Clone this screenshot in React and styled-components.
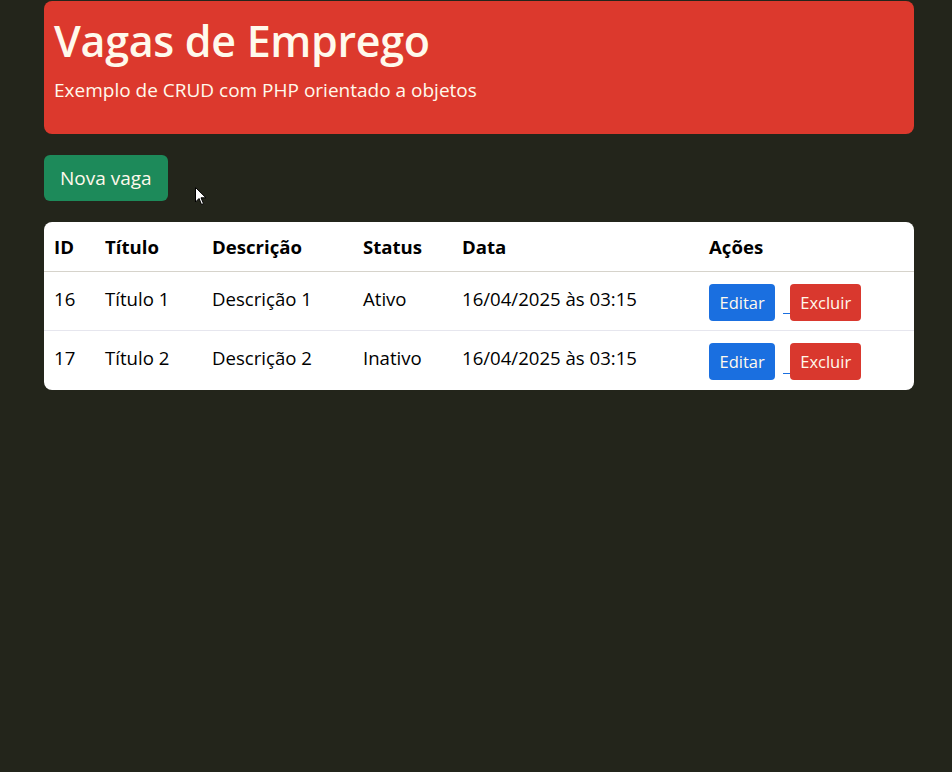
import React from "react";
import styled, { createGlobalStyle } from "styled-components";

const Global = createGlobalStyle`
  html, body { margin: 0; padding: 0; }
  body {
    background: #23251b;
    font-family: "Open Sans", "Noto Sans", sans-serif;
    color: #000;
    min-height: 772px;
  }
`;

const Container = styled.div`
  width: 870px;
  margin-left: 44px;
  padding-top: 1px;
  display: flex;
  flex-direction: column;
  align-items: flex-start;
`;

const Jumbo = styled.section`
  box-sizing: border-box;
  width: 100%;
  height: 133px;
  background: #dc392d;
  border-radius: 8px;
  padding: 13px 10px;
  color: #fff9ec;
`;

const Title = styled.h1`
  margin: 0;
  font-size: 43px;
  font-weight: 600;
  line-height: 54px;
  letter-spacing: -0.3px;
`;

const Subtitle = styled.p`
  margin: 9px 0 0;
  font-size: 19px;
  line-height: 26px;
`;

const ActionBar = styled.div`
  margin-top: 21px;
  position: relative;
`;

const Button = styled.a`
  display: inline-flex;
  align-items: center;
  justify-content: center;
  box-sizing: border-box;
  height: ${(p) => p.$h || 37}px;
  padding: 0 ${(p) => p.$px || 12}px;
  background: ${(p) => p.$bg};
  color: #fff9ec;
  border-radius: ${(p) => p.$r || 4}px;
  font-size: ${(p) => p.$fs || 16.5}px;
  text-decoration: none;
  white-space: nowrap;
`;

const Cursor = styled.svg`
  position: absolute;
  left: 151px;
  top: 32px;
`;

const Table = styled.table`
  margin-top: 21px;
  width: 870px;
  background: #fff;
  border-radius: 8px;
  border-collapse: separate;
  border-spacing: 0;
  overflow: hidden;
  font-size: 18.6px;
`;

const Th = styled.th`
  text-align: left;
  font-weight: 700;
  height: 50px;
  box-sizing: border-box;
  padding: 0 0 0 ${(p) => p.$pl || 0}px;
  border-bottom: 1px solid #d6d3cb;
  width: ${(p) => p.$w}px;
`;

const Td = styled.td`
  height: 59px;
  box-sizing: border-box;
  padding: 0 0 0 ${(p) => p.$pl || 0}px;
  border-bottom: ${(p) => (p.$last ? "none" : "1px solid #e6e6ee")};
  vertical-align: middle;
`;

const TdText = styled.span`
  position: relative;
  top: -3px;
`;

const Actions = styled.div`
  display: flex;
  align-items: center;
  position: relative;
  top: 1px;
`;

const Gap = styled.span`
  display: inline-block;
  width: 15px;
  height: 20px;
  position: relative;
  &::after {
    content: "";
    position: absolute;
    left: 8px;
    right: 0;
    bottom: -2px;
    height: 1px;
    background: #1a6fe0;
  }
`;

const rows = [
  { id: 16, titulo: "Título 1", desc: "Descrição 1", status: "Ativo", data: "16/04/2025 às 03:15" },
  { id: 17, titulo: "Título 2", desc: "Descrição 2", status: "Inativo", data: "16/04/2025 às 03:15" },
];

export default function App() {
  return (
    <>
      <Global />
      <Container>
        <Jumbo>
          <Title>Vagas de Emprego</Title>
          <Subtitle>Exemplo de CRUD com PHP orientado a objetos</Subtitle>
        </Jumbo>
        <ActionBar>
          <Button $bg="#1d8a5a" $h={46} $px={16} $r={6} $fs={19}>Nova vaga</Button>
          <Cursor width="12" height="19" viewBox="0 0 12 19">
            <path d="M0.5 0.5 L0.5 15 L4 11.5 L6.5 17.5 L8.5 16.6 L6 10.8 L11 10.8 Z" fill="#fff" stroke="#000" strokeWidth="1" />
          </Cursor>
        </ActionBar>
        <Table>
          <thead>
            <tr>
              <Th $pl={10} $w={61}>ID</Th>
              <Th $w={107}>Título</Th>
              <Th $w={151}>Descrição</Th>
              <Th $w={99}>Status</Th>
              <Th $w={247}>Data</Th>
              <Th>Ações</Th>
            </tr>
          </thead>
          <tbody>
            {rows.map((r, i) => {
              const last = i === rows.length - 1;
              return (
                <tr key={r.id}>
                  <Td $pl={10} $last={last}><TdText>{r.id}</TdText></Td>
                  <Td $last={last}><TdText>{r.titulo}</TdText></Td>
                  <Td $last={last}><TdText>{r.desc}</TdText></Td>
                  <Td $last={last}><TdText>{r.status}</TdText></Td>
                  <Td $last={last}><TdText>{r.data}</TdText></Td>
                  <Td $last={last}>
                    <Actions>
                      <Button $bg="#1a6fe0" $px={10.5}>Editar</Button>
                      <Gap />
                      <Button $bg="#d9382e" $px={10}>Excluir</Button>
                    </Actions>
                  </Td>
                </tr>
              );
            })}
          </tbody>
        </Table>
      </Container>
    </>
  );
}
